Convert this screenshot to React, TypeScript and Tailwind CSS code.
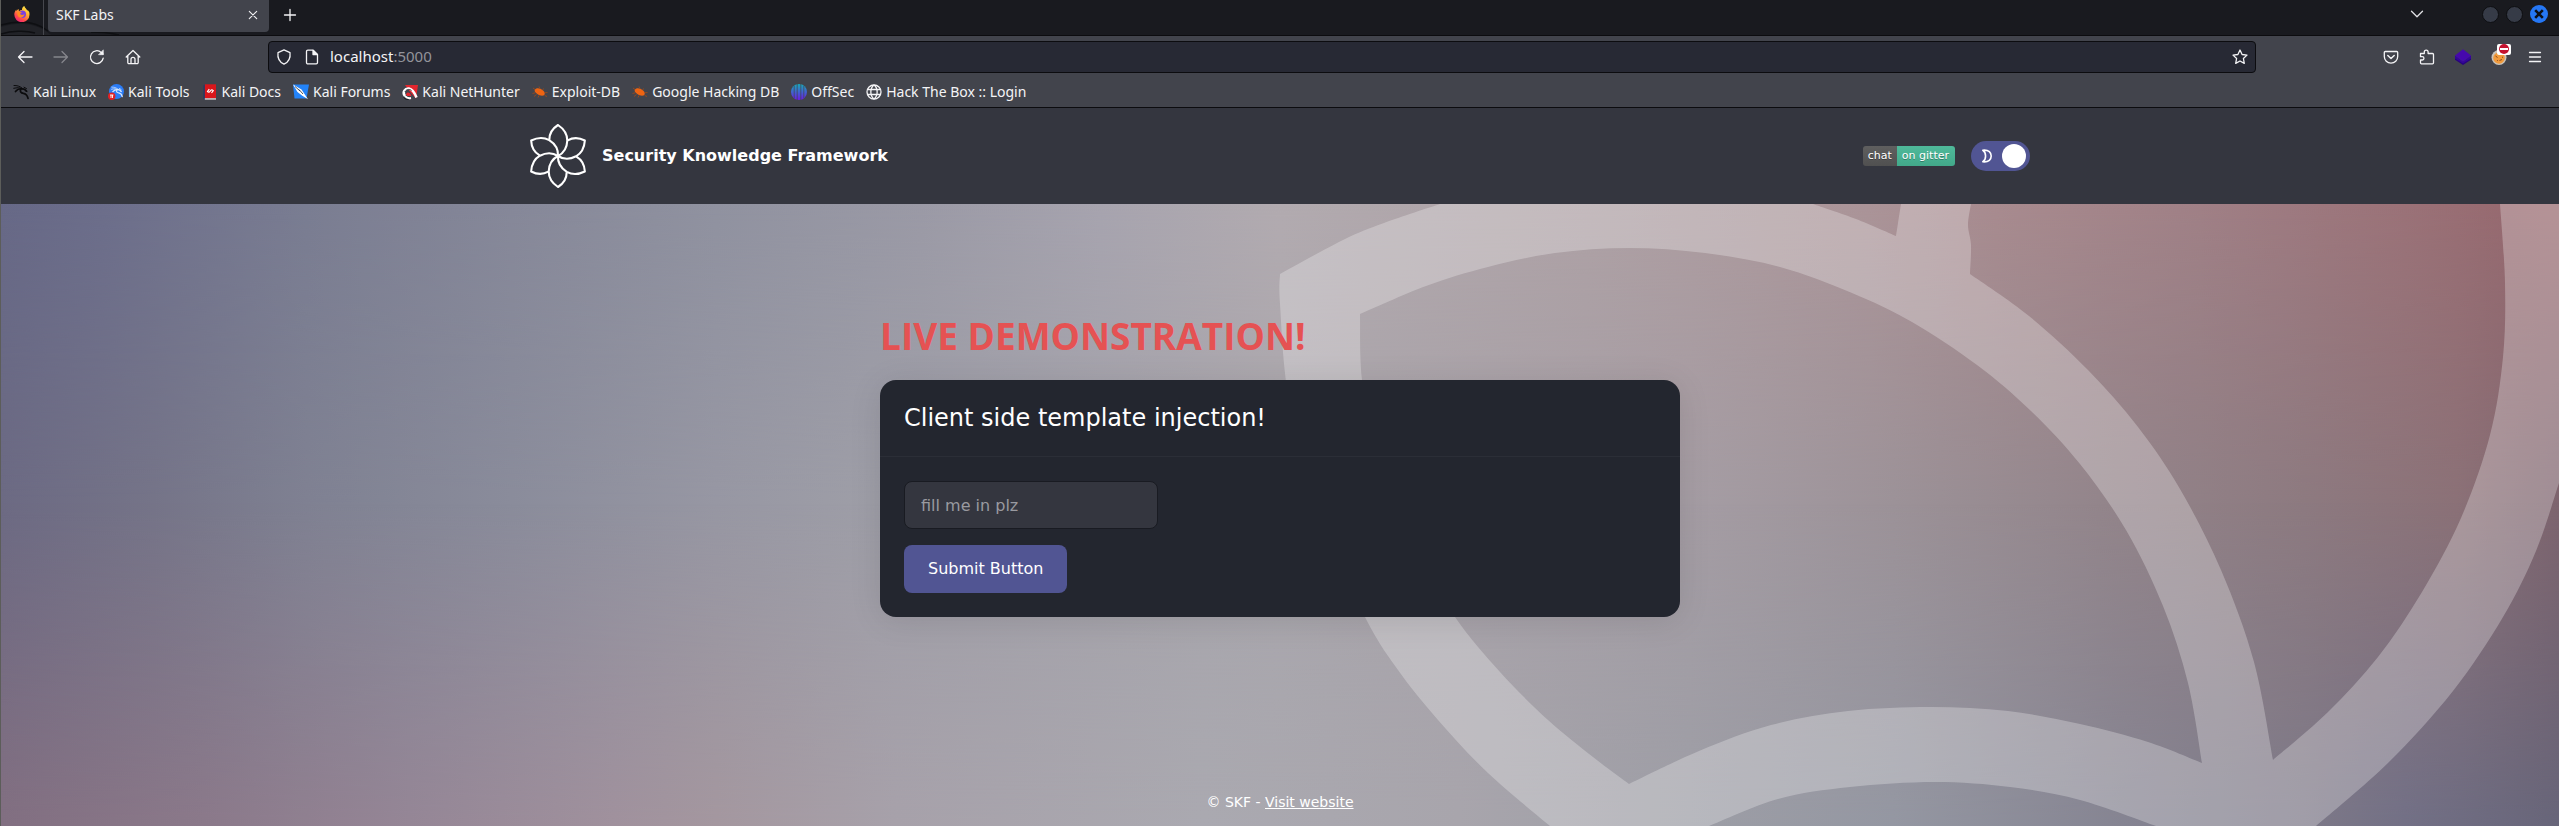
import type { ReactNode } from "react";

const UI_FONT = "font-['Noto_Sans',sans-serif]";

function Line({ children, className = "size-4" }: { children: ReactNode; className?: string }) {
  return (
    <svg
      viewBox="0 0 16 16"
      className={className}
      fill="none"
      stroke="currentColor"
      strokeWidth="1.3"
      strokeLinecap="round"
      strokeLinejoin="round"
      aria-hidden="true"
    >
      {children}
    </svg>
  );
}

function FirefoxIcon() {
  return (
    <svg viewBox="0 0 16 16" className="size-4" aria-hidden="true">
      <defs>
        <linearGradient id="ff" x1="0.8" y1="0" x2="0.2" y2="1">
          <stop offset="0" stopColor="#fff44f" />
          <stop offset="0.35" stopColor="#ffb02e" />
          <stop offset="0.7" stopColor="#ff4f4a" />
          <stop offset="1" stopColor="#f0197c" />
        </linearGradient>
      </defs>
      <path
        d="M15.3 6.2c-.5-1.2-1.4-2-2-2.500.2.6.3 1 .3 1.300C12.700 2.900 11 2.300 10.300 0 8.300 1 7.900 3 8 4c-1.200 0-2.200.5-2.900 1.200-.4-.3-.6-1.500-.3-2.200-1 .4-1.800 1.200-2.200 1.900-.3-.2-.3-1-.3-1.400C1 5 .3 7 .3 8.500a7.600 7.600 0 0 0 15.200.2c0-.9 0-1.700-.2-2.500z"
        fill="url(#ff)"
      />
      <circle cx="8.300" cy="8.200" r="3.700" fill="#7a3fe0" />
      <path d="M3.500 6c1.500-.9 3.500-.4 4.800.6-1.300 0-2 .6-2.100 1.400 1 1.600 3.200 1 4.300.1-.3 2.600-2.500 4.200-4.800 3.400C3.800 10.700 2.800 8.300 3.500 6z" fill="#ff8a1f" />
    </svg>
  );
}

function DragonPath({ color }: { color: string }) {
  return (
    <g fill="none" stroke={color} strokeLinecap="round">
      <path d="M1 1.500C4 1.500 6.500 2 9 4" strokeWidth="1" />
      <path d="M.8 4.300C4 3.300 7 3.800 9.500 5" strokeWidth="1.100" />
      <path d="M2.500 7.500C4 5.500 7 4.500 10 4.800c1.800.2 2.600 1 3.600 2.400" strokeWidth="1.700" />
      <path d="M8 5c-1.500 2.500 0 4 2.300 4.300 2.500.3 4 1.700 4.700 5" strokeWidth="1.700" />
      <path d="M11 3.200l2.500 1.400M12 6.500l1.800 1" strokeWidth="1" />
    </g>
  );
}

const bookmarkIcons: Record<string, ReactNode> = {
  linux: <DragonPath color="#0b0b0d" />,
  tools: (
    <>
      <circle cx="8.500" cy="7.500" r="7.500" fill="#2a7cf7" />
      <g transform="translate(3 2) scale(.75)">
        <DragonPath color="#d7e6fb" />
      </g>
      <circle cx="3.700" cy="12.300" r="3.700" fill="#e02024" />
      <path d="M2 11h3.400M3 11v3M4.500 11v3" stroke="#fff" strokeWidth="0.900" />
    </>
  ),
  docs: (
    <>
      <path d="M1.500 1.500L3 .3v15.400l-1.500-1z" fill="#183a6b" />
      <path d="M2.800.3h11.200v14H2.800z" fill="#d9161b" />
      <path d="M2.800 14.300H14v1.300H2.800z" fill="#e9e3e3" />
      <path d="M7.300 5.200L5.500 7.500c1 1 2 .7 2.800-.5s1.700-1.500 3-.4L9.500 9" fill="none" stroke="#fff" strokeWidth="1.200" />
    </>
  ),
  forums: (
    <>
      <path d="M0 .5h16L13.500 14.500H1.500z" fill="#2383f8" />
      <path d="M0 .5L8.500 5.500l6.500 9.800-6-3.800L4.500 8z" fill="#fff" />
      <path d="M2 2.500l5 4.500M6 5.500l4 4.500" stroke="#20242c" strokeWidth="0.800" fill="none" />
    </>
  ),
  nethunter: (
    <>
      <path d="M3 1h13l-2 13.500L9 9z" fill="#e3262e" />
      <path d="M3 12C0 8.500 3 4 7 4.500c3.500.5 5.500 4 7.500 9" fill="none" stroke="#fff" strokeWidth="2.600" />
      <path d="M3 12c1.500 2 3.500 2.500 6 2" fill="none" stroke="#fff" strokeWidth="2" />
      <path d="M3 8c1-2.500 4-3.500 6.500-1.500M1.500 13.500c1.500 1.500 3 2 5 2" fill="none" stroke="#16181d" strokeWidth="0.900" />
      <path d="M4 10.500c1-3 4-2.500 5.500 1.500H5z" fill="#e3262e" />
    </>
  ),
  bug: (
    <>
      <path d="M3 5.500C5 3.300 8.500 4.500 10.800 6.300c2.200 1.600 2.500 4 1.300 5-2 .9-4.600.3-6.800-1.300S2 7 3 5.500z" fill="#ee6412" />
      <path d="M1 4l2 1.500M.5 9.500l3-.8M2 12.500l2.500-2M6 13.500l1-2M7 2.500l.8 2M11.500 4.500l-.8 1.600M15.500 8.500l-2.500.3M15 12.500l-2.300-1" stroke="#9c4a1c" strokeWidth="0.900" />
    </>
  ),
  offsec: (
    <>
      <defs>
        <linearGradient id="os" x1="0" y1="0" x2="0" y2="16" gradientUnits="userSpaceOnUse">
          <stop offset="0" stopColor="#18a9ba" />
          <stop offset="1" stopColor="#6a1ce4" />
        </linearGradient>
      </defs>
      <circle cx="8" cy="8" r="8" fill="url(#os)" />
      <path d="M3.200 2v12M6.200 0v16M9.800 0v16M12.800 2v12" stroke="#42444c" strokeWidth="0.700" />
    </>
  ),
  globe: (
    <g fill="none" stroke="#f4f4f6" strokeWidth="1.300">
      <circle cx="8" cy="8" r="7" />
      <path d="M1.500 5.500h13M1.500 10.500h13M8 1C3.800 4 3.800 12 8 15M8 1c4.200 3 4.200 11 0 14" />
    </g>
  ),
};

const bookmarks = [
  { label: "Kali Linux", icon: "linux" },
  { label: "Kali Tools", icon: "tools" },
  { label: "Kali Docs", icon: "docs" },
  { label: "Kali Forums", icon: "forums" },
  { label: "Kali NetHunter", icon: "nethunter" },
  { label: "Exploit-DB", icon: "bug" },
  { label: "Google Hacking DB", icon: "bug" },
  { label: "OffSec", icon: "offsec" },
  { label: "Hack The Box :: Login", icon: "globe" },
];

function TabStrip() {
  return (
    <div className="relative flex h-9 items-start justify-between border-b border-[#0c0c0f] bg-[#191a1f]">
      <svg viewBox="0 0 140 35" className="absolute top-0 left-0 h-[35px] w-[140px]" fill="none" aria-hidden="true">
        <path d="M0 27C20 21 34 24 46 32l4 3H0z" fill="#212227" />
        <path d="M0 25C18 20 34 21 47 31M0 34c10-3 24-4 34-1M90 32c12 0 20 1 28 3" stroke="#0e0f12" strokeWidth="1.500" />
      </svg>
      <div className="relative flex items-start">
        <button type="button" aria-label="Firefox View" className="flex h-7 w-[42px] items-center justify-center">
          <FirefoxIcon />
        </button>
        <div className="h-[35px] w-px bg-[#46474d]" />
        <div className="ml-1 flex h-8 w-[221px] items-center justify-between rounded-b-[4px] bg-[#42444c] pr-2 pb-[3px] pl-2 text-[14px] text-[#f4f4f6]">
          SKF Labs
          <button type="button" aria-label="Close tab">
            <Line>
              <path d="M4.300 4.300l7.400 7.400M11.700 4.300l-7.400 7.400" strokeWidth="1.100" />
            </Line>
          </button>
        </div>
        <button type="button" aria-label="New tab" className="ml-[13px] flex h-7 items-center pt-px text-[#f4f4f6]">
          <Line>
            <path d="M8 2.500v11M2.500 8h11" />
          </Line>
        </button>
      </div>
      <div className="relative flex h-7 items-center gap-[7px] pr-[11px]">
        <button type="button" aria-label="List all tabs" className="mr-[50px] text-[#e0e0e4]">
          <Line>
            <path d="M2.500 5.300L8 10.800l5.500-5.500" />
          </Line>
        </button>
        <button type="button" aria-label="Minimize" className="size-[17px] rounded-full border border-[#0d0e11] bg-[#363b47]" />
        <button type="button" aria-label="Maximize" className="size-[17px] rounded-full border border-[#0d0e11] bg-[#363b47]" />
        <button type="button" aria-label="Close window" className="flex size-[18px] items-center justify-center rounded-full bg-[#2577f5] text-[#0d1016]">
          <svg viewBox="0 0 16 16" className="size-4" stroke="currentColor" strokeWidth="2.600" aria-hidden="true">
            <path d="M4.200 4.200l7.600 7.600M11.800 4.200l-7.600 7.600" />
          </svg>
        </button>
      </div>
    </div>
  );
}

function NavBar() {
  return (
    <div className="flex h-10 items-center pt-px text-[#f4f4f6]">
      <div className="flex w-[267px] shrink-0 items-center gap-5 pl-4">
        <button type="button" aria-label="Back">
          <Line>
            <path d="M15 8H1.500M7 2.500L1.500 8 7 13.500" />
          </Line>
        </button>
        <button type="button" aria-label="Forward" className="text-[#85868c]">
          <Line>
            <path d="M1 8h13.500M9 2.500L14.500 8 9 13.500" />
          </Line>
        </button>
        <button type="button" aria-label="Reload">
          <Line>
            <path d="M14.200 9.200A6.400 6.400 0 1 1 12.200 3.400L14 5" />
            <path d="M14.300 1.200v4.500H9.800z" fill="currentColor" strokeWidth="0.600" />
          </Line>
        </button>
        <button type="button" aria-label="Home">
          <Line>
            <path d="M1.200 8L8 1.500 14.800 8M2.800 6.800V13.500a1.200 1.200 0 0 0 1.200 1.200h8a1.200 1.200 0 0 0 1.200-1.200V6.800M6 14.500V10.300a2 2 0 0 1 4 0v4.200" />
          </Line>
        </button>
      </div>
      <div className="flex h-8 flex-1 items-center rounded-[4px] border border-[#0c0c0f] bg-[#272934] px-[7px]">
        <Line>
          <path d="M8 .9L14 3.600c.6 4.600-1.400 9.400-6 11.600C3.400 13 1.400 8.200 2 3.600z" />
        </Line>
        <div className="ml-3">
          <Line>
            <path d="M3.800 1.200h5.400l4.300 4.300v8a1.300 1.300 0 0 1-1.300 1.300H3.800a1.300 1.300 0 0 1-1.300-1.300v-11a1.300 1.300 0 0 1 1.300-1.300z" />
            <path d="M9 1.500v4h4.200z" fill="currentColor" />
          </Line>
        </div>
        <div className="ml-2.5 flex-1 pb-px text-[15px]">
          localhost<span className="text-[#93949b]">:5000</span>
        </div>
        <button type="button" aria-label="Bookmark this page">
          <Line>
            <path d="M8 1l2.100 4.500 4.900.6-3.600 3.400.9 4.900L8 12l-4.300 2.400.9-4.900L1 6.100l4.900-.6z" />
          </Line>
        </button>
      </div>
      <div className="flex w-[303px] shrink-0 items-center justify-end gap-5 pr-4">
        <button type="button" aria-label="Save to Pocket">
          <Line>
            <path d="M2.300 2.500h11.400a1 1 0 0 1 1 1V7.500a6.700 6.700 0 0 1-13.400 0v-4a1 1 0 0 1 1-1z" />
            <path d="M4.800 6.500L8 9.500l3.200-3" strokeWidth="1.500" />
          </Line>
        </button>
        <button type="button" aria-label="Extensions">
          <Line>
            <path d="M1.500 4.500h3.800V3a1.900 1.900 0 0 1 3.800 0v1.500h4.400a1 1 0 0 1 1 1v8.300a1 1 0 0 1-1 1H2.500a1 1 0 0 1-1-1V11h1.800a1.600 1.600 0 0 0 0-3.300H1.500z" />
          </Line>
        </button>
        <button type="button" aria-label="Wappalyzer">
          <svg viewBox="0 0 16 16" className="size-4" aria-hidden="true">
            <path d="M0 8.500l8 4.500 8-4.500v2.300L8 16l-8-5.200z" fill="#28037c" />
            <path d="M0 6.500l8 6 8-6v3L8 14.500 0 9.500z" fill="#34059a" />
            <path d="M8 .2l8 6.300L8 12.500 0 6.500z" fill="#4608ad" />
          </svg>
        </button>
        <button type="button" aria-label="Cookie editor" className="relative">
          <svg viewBox="0 0 16 16" className="size-4" aria-hidden="true">
            <circle cx="8" cy="8.500" r="7.500" fill="#c9c3bb" />
            <circle cx="8" cy="9" r="5.800" fill="#f19a3c" />
            <path d="M4.500 7l2 1.500M8.500 11.500l2.500-1M6 12l.8-.8M11 8l1 .5" stroke="#8a4a1a" strokeWidth="1" />
          </svg>
          <span className="absolute -top-[5px] left-[6px] flex h-[11px] w-[14px] items-center justify-center rounded-[2px] bg-white">
            <span className="flex size-[10px] items-center justify-center rounded-full bg-[#c4122f]">
              <span className="h-[2px] w-[8px] bg-white" />
            </span>
          </span>
        </button>
        <button type="button" aria-label="Open application menu">
          <Line>
            <path d="M2.500 3.500h11M2.500 8h11M2.500 12.500h11" />
          </Line>
        </button>
      </div>
    </div>
  );
}

function BookmarkBar() {
  return (
    <nav aria-label="Bookmarks" className="flex h-8 items-center gap-3 border-b border-[#0c0c0f] pl-3 text-[14px] text-[#f4f4f6]">
      {bookmarks.map((b) => (
        <a key={b.label} href="#" className="flex items-center gap-1 whitespace-nowrap">
          <svg viewBox="0 0 16 16" className="size-4" aria-hidden="true">
            {bookmarkIcons[b.icon]}
          </svg>
          {b.label}
        </a>
      ))}
    </nav>
  );
}

function SkfLogo() {
  return (
    <svg viewBox="-28 -32 56 64" className="h-16 w-14" fill="none" stroke="#fff" strokeWidth="2.100" strokeLinejoin="round" aria-hidden="true">
      {[0, 60, 120, 180, 240, 300].map((angle) => (
        <path
          key={angle}
          transform={`rotate(${angle})`}
          d="M-8.700 -16.200C-8.700 -21.500 -5.500 -27.500 0 -31C6 -27 9.300 -21 9.300 -15.500C9 -8 6 -3 0 0"
        />
      ))}
    </svg>
  );
}

function SiteHeader() {
  return (
    <header className="flex h-24 items-center bg-[#34363f]">
      <div className="mx-auto flex w-full max-w-[1500px] items-center">
        <a href="#" className="flex items-center gap-4 text-base font-bold text-white">
          <SkfLogo />
          Security Knowledge Framework
        </a>
        <a
          href="#"
          className="ml-auto flex h-5 overflow-hidden rounded-[3px] text-[11px] leading-5 text-white [text-shadow:0_1px_0_rgb(0_0_0/0.3)]"
        >
          <span className="bg-linear-to-b from-[#5f5f5f] to-[#505050] px-[5px]">chat</span>
          <span className="bg-linear-to-b from-[#4fb99a] to-[#42a98a] pr-[6px] pl-[5px]">on gitter</span>
        </a>
        <button type="button" role="switch" aria-checked="true" aria-label="Dark mode" className="ml-4 flex h-[30px] w-[59px] items-center justify-between rounded-full bg-[#515593] pr-1 pl-2">
          <svg viewBox="0 0 16 16" className="size-4" fill="none" stroke="#fff" strokeWidth="1.600" strokeLinejoin="round" aria-hidden="true">
            <path d="M3.800 2.200C10 1.500 12.200 5 12.200 8s-2.200 6.500-8.400 5.800C7.500 11.500 7.500 4.500 3.800 2.200z" />
          </svg>
          <span className="size-6 rounded-full bg-white" />
        </button>
      </div>
    </header>
  );
}

type Stop = [number, string];

const topStops: Stop[] = [
  [0, "#676987"],
  [0.04, "#6c6e8b"],
  [0.12, "#7a7d92"],
  [0.2, "#868899"],
  [0.28, "#9092a0"],
  [0.36, "#9b9aa6"],
  [0.43, "#a7a4af"],
  [0.5, "#b2abb0"],
  [0.62, "#aea1a5"],
  [0.73, "#ab9498"],
  [0.78, "#a88b8f"],
  [0.86, "#a08086"],
  [0.94, "#9b7278"],
  [0.98, "#976a70"],
  [1, "#9a6b70"],
];

const middleStops: Stop[] = [
  [0, "#6c6a83"],
  [0.06, "#757488"],
  [0.12, "#7f8192"],
  [0.2, "#8a8c9b"],
  [0.28, "#9797a3"],
  [0.34, "#9e9ea7"],
  [0.5, "#a9a6ac"],
  [0.66, "#a59da4"],
  [0.74, "#9c9298"],
  [0.82, "#93858b"],
  [0.9, "#8d7a80"],
  [0.96, "#8b7177"],
  [1, "#7d646e"],
];

const bottomStops: Stop[] = [
  [0, "#826f81"],
  [0.08, "#8b798a"],
  [0.16, "#958696"],
  [0.24, "#a0919d"],
  [0.28, "#a4979f"],
  [0.35, "#a7a1aa"],
  [0.47, "#aaa9b0"],
  [0.57, "#a8a5ac"],
  [0.66, "#9d9ea6"],
  [0.74, "#9497a2"],
  [0.83, "#858492"],
  [0.9, "#7d7988"],
  [0.94, "#727086"],
  [1, "#676579"],
];

type Point = [number, number];

// Each contour is a ring of smooth runs; a corner sits wherever two runs meet.
const flowerContours: Point[][][] = [
  [
    [[1440, 204], [1384, 223], [1343, 240], [1280, 274]],
    [[1280, 304], [1289, 400], [1319, 515], [1365, 617], [1398, 670], [1438, 720], [1488, 773], [1550, 826]],
    [[1709, 826]],
    [[1778, 799], [1850, 787], [1935, 782], [2010, 787], [2080, 800], [2156, 826]],
    [[2316, 826]],
    [[2388, 763], [2453, 691], [2503, 617], [2536, 551], [2559, 483]],
    [[2559, 204]],
  ],
  [
    [[1971, 204], [1968, 225], [1971, 245], [1970, 274]],
    [[2029, 316], [2088, 370], [2138, 427], [2180, 489], [2221, 570], [2254, 662], [2273, 760]],
    [[2328, 712], [2378, 657], [2422, 592], [2461, 518], [2490, 435], [2503, 357], [2505, 283], [2500, 204]],
  ],
  [
    [[1360, 314], [1426, 286], [1488, 267], [1555, 253], [1629, 248], [1705, 253], [1780, 267], [1852, 293], [1912, 322], [1977, 365], [2031, 411], [2080, 464], [2126, 530], [2163, 606], [2188, 683], [2202, 763]],
    [[2148, 742], [2080, 724], [2008, 711], [1931, 707], [1848, 711], [1771, 725], [1699, 751], [1629, 784]],
    [[1593, 757], [1548, 720], [1500, 672], [1455, 617], [1408, 540], [1376, 456], [1362, 380], [1360, 314]],
  ],
  [
    [[1813, 204], [1856, 219], [1896, 236]],
    [[1898, 223], [1901, 204]],
  ],
];

function smoothRun(points: Point[]): string {
  let d = "";
  for (let i = 0; i < points.length - 1; i += 1) {
    const before = points[i - 1] ?? points[i];
    const from = points[i];
    const to = points[i + 1];
    const after = points[i + 2] ?? to;
    d += `C${from[0] + (to[0] - before[0]) / 6} ${from[1] + (to[1] - before[1]) / 6} ${to[0] - (after[0] - from[0]) / 6} ${to[1] - (after[1] - from[1]) / 6} ${to[0]} ${to[1]}`;
  }
  return d;
}

function contourPath(runs: Point[][]): string {
  let previous: Point | null = null;
  let d = "";
  for (const run of runs) {
    if (previous === null) {
      d += `M${run[0][0]} ${run[0][1]}${smoothRun(run)}`;
    } else {
      d += smoothRun([previous, ...run]);
    }
    previous = run[run.length - 1];
  }
  return `${d}Z`;
}

const flowerPath = flowerContours.map(contourPath).join("");

function StopList({ stops }: { stops: Stop[] }) {
  return (
    <>
      {stops.map(([offset, color]) => (
        <stop key={offset} offset={offset} stopColor={color} />
      ))}
    </>
  );
}

function Backdrop() {
  return (
    <svg
      viewBox="0 204 2559 622"
      preserveAspectRatio="xMaxYMin slice"
      className="absolute inset-0 size-full"
      aria-hidden="true"
    >
      <defs>
        <linearGradient id="bgTop">
          <StopList stops={topStops} />
        </linearGradient>
        <linearGradient id="bgMiddle">
          <StopList stops={middleStops} />
        </linearGradient>
        <linearGradient id="bgBottom">
          <StopList stops={bottomStops} />
        </linearGradient>
        <linearGradient id="fadeMiddle" x1="0" y1="0" x2="0" y2="1">
          <stop offset="0" stopColor="#000" />
          <stop offset="0.48" stopColor="#fff" />
        </linearGradient>
        <linearGradient id="fadeBottom" x1="0" y1="0" x2="0" y2="1">
          <stop offset="0.48" stopColor="#000" />
          <stop offset="1" stopColor="#fff" />
        </linearGradient>
        <mask id="maskMiddle" style={{ colorInterpolation: "sRGB", maskType: "luminance" }}>
          <rect x="0" y="204" width="2559" height="622" fill="url(#fadeMiddle)" />
        </mask>
        <mask id="maskBottom" style={{ colorInterpolation: "sRGB", maskType: "luminance" }}>
          <rect x="0" y="204" width="2559" height="622" fill="url(#fadeBottom)" />
        </mask>
      </defs>
      <rect x="0" y="204" width="2559" height="622" fill="url(#bgTop)" />
      <rect x="0" y="204" width="2559" height="622" fill="url(#bgMiddle)" mask="url(#maskMiddle)" />
      <rect x="0" y="204" width="2559" height="622" fill="url(#bgBottom)" mask="url(#maskBottom)" />
      <path fill="#fff" fillOpacity="0.27" fillRule="evenodd" d={flowerPath} />
    </svg>
  );
}

function DemoSection() {
  return (
    <main className="relative flex flex-1 flex-col">
      <Backdrop />
      <div className="relative mx-auto w-full max-w-[800px] flex-1 pt-[104px]">
        <h1 className="font-['Open_Sans',sans-serif] text-[37px] leading-14 font-bold text-[#e55253]">
          LIVE DEMONSTRATION!
        </h1>
        <section className="mt-4 rounded-2xl bg-[#23262f] shadow-[0_4px_32px_rgb(0_0_0/0.1)]">
          <h2 className="border-b border-[#2b2e37] p-6 text-2xl leading-7 text-white">Client side template injection!</h2>
          <form className="flex flex-col items-start gap-4 p-6" onSubmit={(event) => event.preventDefault()}>
            <input
              type="text"
              aria-label="fill me in plz"
              placeholder="fill me in plz"
              className="h-12 w-[254px] rounded-lg border border-[#191b22] bg-[#34363f] px-4 text-base text-white placeholder:text-[#999aa0]"
            />
            <button type="submit" className="h-12 rounded-lg bg-[#515593] px-6 text-base text-white">
              Submit Button
            </button>
          </form>
        </section>
      </div>
      <footer className="relative pb-3 text-center text-[14px] leading-6 text-white">
        © SKF -{" "}
        <a href="#" className="underline">
          Visit website
        </a>
      </footer>
    </main>
  );
}

export default function App() {
  return (
    <div className="flex min-h-screen flex-col border-l border-[#5c5d5a] font-['DejaVu_Sans',sans-serif]">
      <div className={`bg-[#42444c] ${UI_FONT}`}>
        <TabStrip />
        <NavBar />
        <BookmarkBar />
      </div>
      <SiteHeader />
      <DemoSection />
    </div>
  );
}
